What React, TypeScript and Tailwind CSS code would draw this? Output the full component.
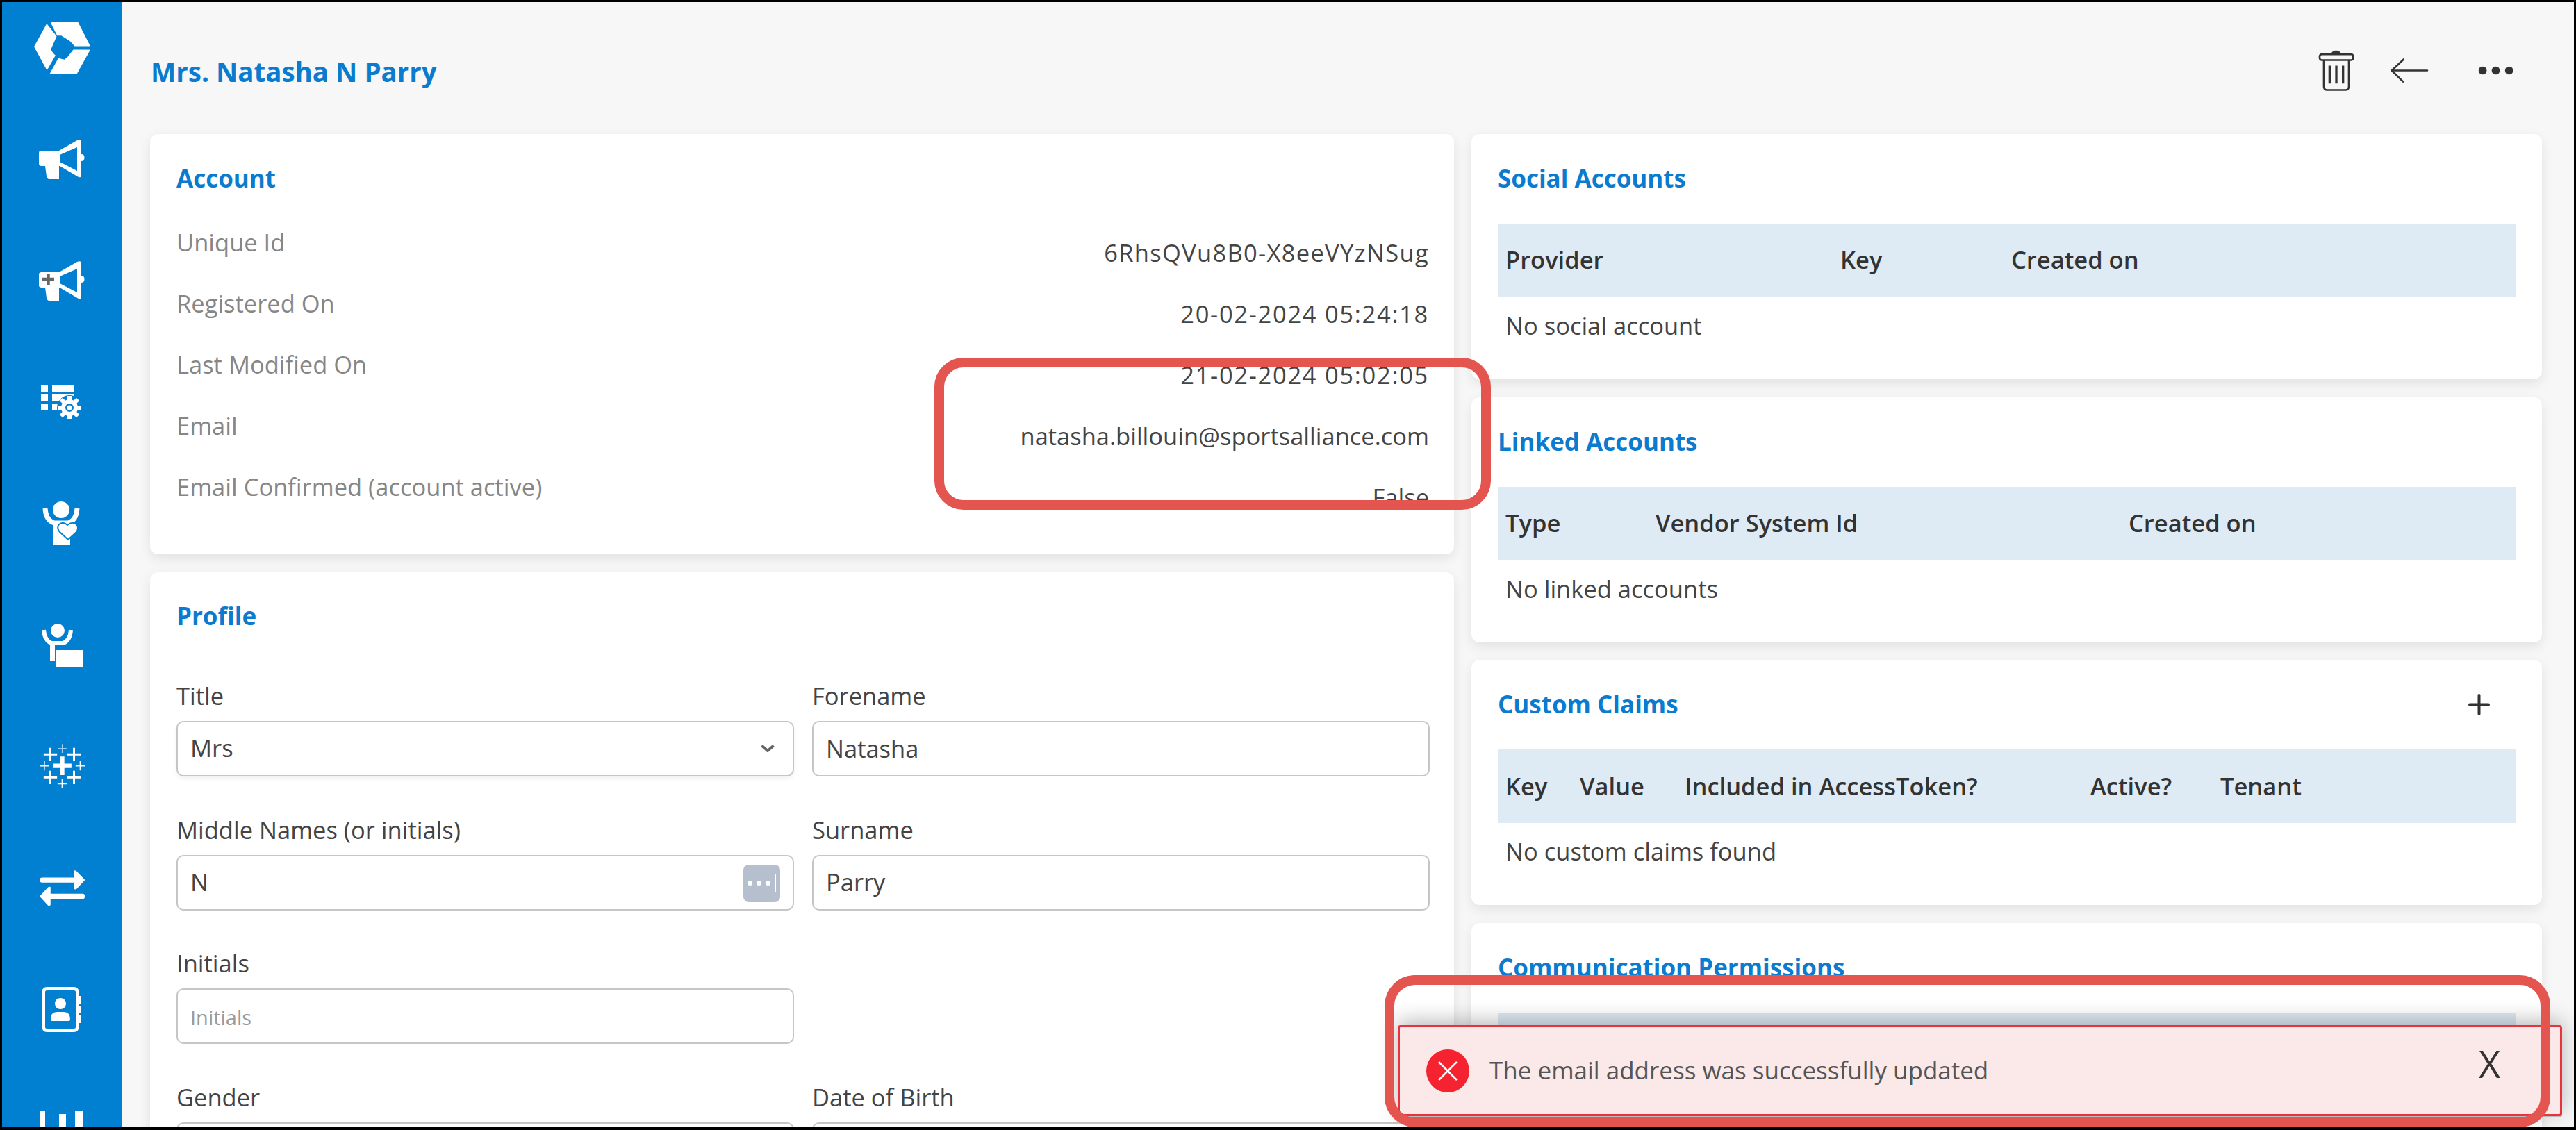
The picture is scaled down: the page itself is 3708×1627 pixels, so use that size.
import React from "react";

function Logo() {
  return (
    <svg viewBox="47 28 250 232" width={83} height={77} fill="#fff">
      <path d="M105 40 L50 140 L106 243 L143 178 Q122 160 125 148 L148 95 Z" />
      <path d="M124 40 Q125 32 135 32 L240 32 L294 138 L226 138 L206 116 L168 92 L150 92 Z" />
      <path d="M294 153 L236 258 L118 258 L155 190 L182 196 L196 184 L220 153 Z" />
    </svg>
  );
}

function Megaphone({ plus }: { plus?: boolean }) {
  return (
    <svg viewBox="0 0 66 58" width={66} height={58}>
      <path
        fillRule="evenodd"
        fill="#fff"
        d="M0 20 Q0 17 4 17 H29 L55 2 Q60 0 61 3 V53 Q61 56 57 55 L30 39 H29 L29 58 H15 Q12 58 11 54 L9 39 H4 Q0 39 0 36 Z M30 23 V33 L55 46 V12 Z"
      />
      <ellipse cx={62} cy={27} rx={3.5} ry={5} fill="#fff" />
      {plus && <path d="M13.5 19 V35 M5 27 H22" stroke="#666" strokeWidth={4.5} />}
    </svg>
  );
}

function ListGear() {
  const teeth = [0, 45, 90, 135, 180, 225, 270, 315];
  return (
    <svg viewBox="0 0 60 52" width={60} height={52}>
      <g fill="#fff">
        <rect x={0} y={1} width={10} height={10} />
        <rect x={0} y={14} width={10} height={10} />
        <rect x={0} y={28} width={10} height={10} />
        <rect x={16} y={1} width={32} height={10} />
        <rect x={16} y={14} width={32} height={10} />
        <rect x={16} y={28} width={14} height={10} />
      </g>
      <circle cx={41} cy={34} r={18} fill="#0180d1" />
      {teeth.map((a) => (
        <rect key={a} x={38} y={17} width={6} height={8} fill="#fff" transform={`rotate(${a} 41 34)`} />
      ))}
      <circle cx={41} cy={34} r={12} fill="#fff" />
      <circle cx={41} cy={34} r={6} fill="#0180d1" />
      <circle cx={41} cy={34} r={3.5} fill="#fff" />
    </svg>
  );
}

function PersonHeart() {
  return (
    <svg viewBox="0 0 58 64" width={58} height={64}>
      <circle cx={28} cy={12} r={12} fill="#fff" />
      <path d="M5 10 Q6 27 18 31 H38 Q50 27 51 10" fill="none" stroke="#fff" strokeWidth={7} />
      <path d="M16 30 H41 V62 H16 Z" fill="#fff" />
      <path
        d="M38 55 L26 44 Q21 38 25 33 Q31 28 37 34 Q44 28 50 33 Q54 38 50 44 Z"
        fill="#fff"
        stroke="#0180d1"
        strokeWidth={2}
      />
    </svg>
  );
}

function PersonBoard() {
  return (
    <svg viewBox="0 0 60 62" width={60} height={62}>
      <circle cx={24} cy={10} r={10} fill="#fff" />
      <path d="M4 9 Q5 24 15 28 H32 Q42 24 43 9" fill="none" stroke="#fff" strokeWidth={6} />
      <rect x={13} y={26} width={7} height={28} fill="#fff" />
      <rect x={22} y={38} width={38} height={24} fill="#fff" />
    </svg>
  );
}

function Tableau() {
  const plus = (x: number, y: number, a: number, w: number, o = 1) => (
    <path key={`${x}-${y}`} d={`M${x - a} ${y} H${x + a} M${x} ${y - a} V${y + a}`} stroke="#fff" strokeWidth={w} strokeOpacity={o} />
  );
  return (
    <svg viewBox="72 95 200 195" width={67} height={65} fill="none">
      {plus(172, 190, 40, 19)}
      {plus(121, 141, 29, 9)}
      {plus(223, 141, 29, 9)}
      {plus(121, 240, 29, 9)}
      {plus(223, 240, 29, 9)}
      {plus(95, 190, 20, 5)}
      {plus(250, 190, 20, 5)}
      {plus(172, 267, 20, 5)}
      {plus(172, 115, 19, 3.5, 0.6)}
    </svg>
  );
}

function Arrows() {
  return (
    <svg viewBox="72 640 200 155" width={67} height={52} fill="#fff">
      <path d="M86 682 H240" stroke="#fff" strokeWidth={22} strokeLinecap="round" />
      <path d="M222 642 Q222 640 232 642 L270 682 L232 722 Q222 722 222 720 Z" />
      <path d="M105 752 H259" stroke="#fff" strokeWidth={22} strokeLinecap="round" />
      <path d="M122 712 Q122 710 112 712 L75 752 L112 792 Q122 792 122 790 Z" />
    </svg>
  );
}

function ContactBook() {
  return (
    <svg viewBox="0 0 58 65" width={58} height={65}>
      <rect x={2.5} y={2.5} width={49} height={60} rx={5} fill="none" stroke="#fff" strokeWidth={5} />
      <rect x={52} y={13} width={5} height={11} rx={1.5} fill="#fff" />
      <rect x={52} y={27} width={5} height={11} rx={1.5} fill="#fff" />
      <rect x={52} y={41} width={5} height={11} rx={1.5} fill="#fff" />
      <circle cx={27} cy={24} r={8} fill="#fff" />
      <path d="M13 47 Q13 36 22 36 H32 Q41 36 41 47 Q41 49 38 49 H16 Q13 49 13 47 Z" fill="#fff" />
    </svg>
  );
}

function Chart() {
  return (
    <svg viewBox="0 0 62 60" width={62} height={60} fill="#fff">
      <rect x={0} y={0} width={7} height={60} />
      <rect x={27} y={5} width={10} height={55} />
      <rect x={50} y={0} width={11} height={60} />
    </svg>
  );
}

function Trash() {
  return (
    <svg viewBox="405 208 162 182" width={54} height={61} fill="none" stroke="#333">
      <path d="M465 226 Q468 214 485 214 Q502 214 505 226 Z" fill="#333" strokeWidth={2} />
      <rect x={414} y={229} width={145} height={25} rx={9} strokeWidth={8} />
      <path d="M432 254 V368 Q432 383 447 383 H525 Q540 383 540 368 V254" strokeWidth={8} />
      <path d="M457 278 V355 M486 278 V355 M515 278 V355" strokeWidth={10} />
    </svg>
  );
}

function BackArrow() {
  return (
    <svg viewBox="725 250 170 110" width={57} height={37} fill="none" stroke="#333" strokeWidth={8} strokeLinecap="round">
      <path d="M735 305 H886 M784 257 L733 305 L782 353" />
    </svg>
  );
}

function Dots() {
  return (
    <svg viewBox="1100 285 160 40" width={53} height={13} fill="#333">
      <circle cx={1122} cy={305} r={18} />
      <circle cx={1180} cy={305} r={18} />
      <circle cx={1239} cy={305} r={18} />
    </svg>
  );
}

const navIcons = [
  <Megaphone key="a" />,
  <Megaphone key="b" plus />,
  <ListGear key="c" />,
  <PersonHeart key="d" />,
  <PersonBoard key="e" />,
  <Tableau key="f" />,
  <Arrows key="g" />,
  <ContactBook key="h" />,
  <Chart key="i" />,
];

function Heading({ children }: { children: React.ReactNode }) {
  return <h2 className="h-[46px] text-[35px] leading-[45px] font-bold text-[#0a7bce]">{children}</h2>;
}

function TableCard({
  title,
  cols,
  template,
  empty,
  action,
}: {
  title: string;
  cols: string[];
  template: string;
  empty: string;
  action?: React.ReactNode;
}) {
  return (
    <section className="h-[353px] shrink-0 rounded-[12px] bg-white px-[38px] pt-[41px] shadow-[0_6px_18px_rgba(0,0,0,0.09)]">
      <div className="flex items-center justify-between">
        <Heading>{title}</Heading>
        {action}
      </div>
      <div className={`mt-[42px] grid h-[106px] items-center bg-[#deebf4] pb-[2px] pl-[11px] text-[34.5px] font-semibold text-[#333] ${template}`}>
        {cols.map((c) => (
          <span key={c}>{c}</span>
        ))}
      </div>
      <p className="mt-[19px] h-[46px] pl-[11px] text-[34.5px] leading-[44px] text-[#444]">{empty}</p>
    </section>
  );
}

function Field({ label, children }: { label: string; children: React.ReactNode }) {
  return (
    <div>
      <label className="block h-[46px] text-[34.5px] leading-[44px] text-[#444]">{label}</label>
      <div className="relative mt-[12px] h-[80px]">{children}</div>
    </div>
  );
}

const inputClass =
  "h-[80px] w-full rounded-[10px] border-[2.5px] border-[#c6c6c6] bg-white pb-[2px] pl-[18px] text-[34.5px] text-[#444] outline-none placeholder:text-[29px] placeholder:text-[#9b9b9b]";

export default function App() {
  const rows = [
    ["Unique Id", "6RhsQVu8B0-X8eeVYzNSug", "tracking-[1.3px]"],
    ["Registered On", "20-02-2024 05:24:18", "tracking-[1.7px]"],
    ["Last Modified On", "21-02-2024 05:02:05", "tracking-[1.7px]"],
    ["Email", "natasha.billouin@sportsalliance.com", ""],
    ["Email Confirmed (account active)", "False", ""],
  ];
  return (
    <div className="relative box-border flex h-[1627px] w-[3708px] overflow-hidden border-[3px] border-b-4 border-black bg-[#f7f7f7] [font-family:'Open_Sans','Noto_Sans',sans-serif]">
      <aside className="flex w-[172px] shrink-0 flex-col items-center bg-[#0180d1]">
        <div className="h-[138px] shrink-0 pt-[27px]">
          <Logo />
        </div>
        {navIcons.map((icon, i) => (
          <div key={i} className="flex h-[175px] w-full shrink-0 items-center justify-center">
            {icon}
          </div>
        ))}
      </aside>

      <main className="min-w-0 flex-1 pl-[41px] pr-[46px]">
        <header className="flex h-[190px] items-center justify-between pt-[6px]">
          <h1 className="ml-[1px] mt-[6px] text-[38.5px] font-bold text-[#0a7bce]">Mrs. Natasha N Parry</h1>
          <div className="mr-[40px] flex items-center">
            <Trash />
            <div className="ml-[50px]">
              <BackArrow />
            </div>
            <div className="ml-[69px]">
              <Dots />
            </div>
          </div>
        </header>

        <div className="grid grid-cols-[1877px_1541px] gap-x-[25px]">
          <div className="flex flex-col gap-[26px]">
            <section className="h-[605px] rounded-[12px] bg-white pl-[38px] pr-[36px] pt-[41px] shadow-[0_6px_18px_rgba(0,0,0,0.09)]">
              <Heading>Account</Heading>
              <div className="flex justify-between">
                <div className="mt-[25px] text-[34.5px] leading-[88px] text-[#868686]">
                  {rows.map((r) => (
                    <div key={r[0]} className="h-[88px]">
                      {r[0]}
                    </div>
                  ))}
                </div>
                <div className="mt-[40px] text-right text-[34.5px] leading-[88px] text-[#444]">
                  {rows.map((r) => (
                    <div key={r[0]} className={`h-[88px] ${r[2]}`}>
                      {r[1]}
                    </div>
                  ))}
                </div>
              </div>
            </section>

            <section className="rounded-[12px] bg-white pl-[38px] pr-[35px] pt-[40px] pb-[60px] shadow-[0_6px_18px_rgba(0,0,0,0.09)]">
              <Heading>Profile</Heading>
              <div className="mt-[70px] grid grid-cols-2 gap-x-[26px] gap-y-[54.5px]">
                <Field label="Title">
                  <div className="flex h-[80px] items-center justify-between rounded-[10px] border-[2.5px] border-[#c6c6c6] pb-[2px] pl-[18px] pr-[26px] text-[34.5px] text-[#444] shadow-[0_3px_6px_rgba(0,0,0,0.06)]">
                    <span>Mrs</span>
                    <svg viewBox="0 0 20 11" width={20} height={11} fill="none" stroke="#666" strokeWidth={4}>
                      <path d="M1.5 1.5 L10 9 L18.5 1.5" />
                    </svg>
                  </div>
                </Field>
                <Field label="Forename">
                  <input readOnly value="Natasha" className={inputClass} />
                </Field>
                <Field label="Middle Names (or initials)">
                  <input readOnly value="N" className={inputClass} />
                  <button className="absolute right-[20px] top-[14px] flex h-[54px] w-[53px] items-center justify-center gap-[6px] rounded-[8px] bg-[#b6bfcd]">
                    <span className="h-[7px] w-[7px] rounded-full bg-white" />
                    <span className="h-[7px] w-[7px] rounded-full bg-white" />
                    <span className="h-[7px] w-[7px] rounded-full bg-white" />
                    <span className="h-[26px] w-[2px] bg-white" />
                  </button>
                </Field>
                <Field label="Surname">
                  <input readOnly value="Parry" className={inputClass} />
                </Field>
                <Field label="Initials">
                  <input readOnly placeholder="Initials" className={inputClass} />
                </Field>
                <div />
                <Field label="Gender">
                  <input readOnly className={inputClass} />
                </Field>
                <Field label="Date of Birth">
                  <input readOnly className={inputClass} />
                </Field>
              </div>
            </section>
          </div>

          <div className="flex flex-col gap-[25.7px]">
            <TableCard
              title="Social Accounts"
              cols={["Provider", "Key", "Created on"]}
              template="grid-cols-[482px_246px_1fr]"
              empty="No social account"
            />
            <TableCard
              title="Linked Accounts"
              cols={["Type", "Vendor System Id", "Created on"]}
              template="grid-cols-[216px_681px_1fr]"
              empty="No linked accounts"
            />
            <TableCard
              title="Custom Claims"
              cols={["Key", "Value", "Included in AccessToken?", "Active?", "Tenant"]}
              template="grid-cols-[107px_151px_584px_187px_1fr]"
              empty="No custom claims found"
              action={
                <svg viewBox="0 0 31 31" width={31} height={31} className="mr-[37px]" stroke="#333" strokeWidth={4} strokeLinecap="round">
                  <path d="M15.5 2 V29 M2 15.5 H29" />
                </svg>
              }
            />
            <TableCard title="Communication Permissions" cols={["", " "]} template="grid-cols-2" empty="" />
          </div>
        </div>
      </main>

      <div className="absolute left-[2009px] top-[1473px] flex h-[131px] w-[1676px] items-center rounded-[4px] border-[3px] border-[#e8333c] bg-[#fbe9e9] pl-[38px] shadow-[0_2px_0_#bbb,0_-6px_30px_rgba(0,0,0,0.28)]">
        <svg viewBox="0 0 62 62" width={62} height={62} className="shrink-0">
          <circle cx={31} cy={31} r={31} fill="#f5222f" />
          <path d="M18 18 L44 44 M44 18 L18 44" stroke="#fff" strokeWidth={2.5} />
        </svg>
        <span className="ml-[29px] text-[35px] text-[#555]">The email address was successfully updated</span>
        <span className="absolute left-[1553px] top-[25px] text-[54px] leading-none text-[#333]">X</span>
      </div>

      <div className="pointer-events-none absolute left-[1342px] top-[512px] h-[219px] w-[801px] rounded-[42px] border-[14px] border-[#e5554f]" />
      <div className="pointer-events-none absolute left-[1990px] top-[1401px] h-[219px] w-[1678px] rounded-[44px] border-[14px] border-[#e5554f]" />
    </div>
  );
}
